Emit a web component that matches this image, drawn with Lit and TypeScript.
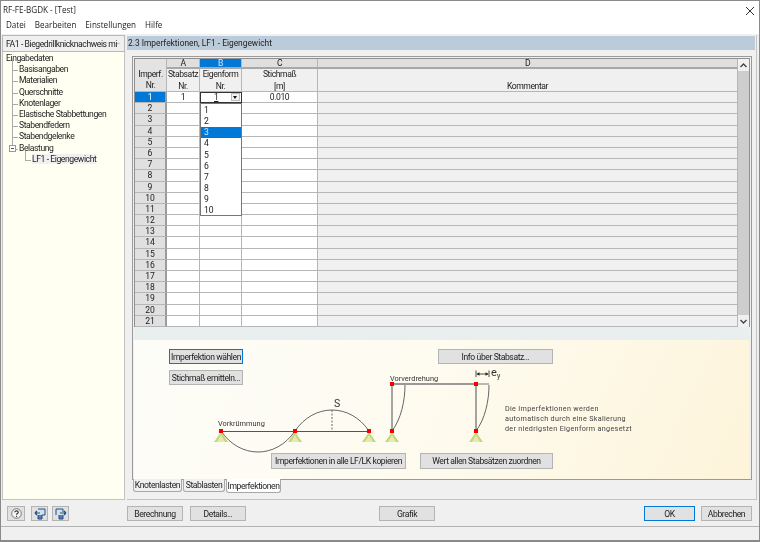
import { LitElement, html, css, svg } from "lit";
import { customElement } from "lit/decorators.js";

const tree = ["Basisangaben","Materialien","Querschnitte","Knotenlager","Elastische Stabbettungen","Stabendfedern","Stabendgelenke"];
const rows = Array.from({length:21},(_, i)=>i+1);
const drop = [1,2,3,4,5,6,7,8,9,10];

const support = (x:number,y:number)=>svg`<path d="M${x} ${y}L${x-7} ${y+10}H${x+7}Z" fill="#c5d77a"/><path d="M${x} ${y+3}L${x-4} ${y+10}H${x+4}Z" fill="#e3ecae"/>`;
const node = (x:number,y:number)=>svg`<rect x=${x-2} y=${y-2} width="4" height="4" fill="#f00000"/>`;

@customElement("app-root")
export class AppRoot extends LitElement {
  static styles = css`
    :host{display:block;width:760px;height:542px;overflow:hidden;font-family:Roboto,"Liberation Sans",Arial,sans-serif;font-size:8.6px;letter-spacing:-.42px;color:#1c1c1c;}
    *{box-sizing:border-box;}
    .window{width:760px;height:542px;border:1px solid #8a8a8a;border-bottom:2px solid #8a8a8a;background:#f0f0f0;display:flex;flex-direction:column;position:relative;filter:blur(.25px);}
    .top{background:#fff;height:33px;display:flex;flex-direction:column;letter-spacing:0;}
    .title{height:16px;padding:3px 0 0 2px;font-family:"Open Sans",sans-serif;font-size:8.1px;line-height:11px;display:flex;justify-content:space-between;}
    .close{margin:2px 4px 0 0;}
    .menu{display:flex;gap:9px;padding:2px 0 0 5px;font-family:"Open Sans",sans-serif;font-size:8.1px;line-height:11px;}
    .main{height:466px;display:flex;padding:1px 2px 0 1px;gap:2px;}
    .left{width:123px;flex:none;display:flex;flex-direction:column;}
    .combo{height:17px;background:#f0f0f0;border:1px solid #b8b8b8;display:flex;align-items:center;justify-content:space-between;padding:0 4px 0 3px;white-space:nowrap;overflow:hidden;}
    .tree{flex:1;background:#fffff2;border:1px solid #c4c4c4;border-top:none;padding:1px 0 0 3px;line-height:11.2px;}
    .tree div{height:11.2px;white-space:nowrap;}
    .ti{position:relative;padding-left:13px;}
    .ti::before{content:"";position:absolute;left:6px;top:6px;width:6px;border-top:1px solid #aaa;}
    .ti::after{content:"";position:absolute;left:6px;top:-5px;height:11px;border-left:1px solid #aaa;}
    .sign{position:absolute;left:3px;top:2px;width:7px;height:7px;border:1px solid #9a9a9a;background:#fff;z-index:1;}
    .sign::after{content:"";position:absolute;left:1px;top:2px;width:3px;border-top:1px solid #555;}
    .leaf{position:relative;padding-left:26px;}
    .leaf::before{content:"";position:absolute;left:19px;top:6px;width:6px;border-top:1px solid #aaa;}
    .leaf::after{content:"";position:absolute;left:19px;top:-3px;height:9px;border-left:1px solid #aaa;}
    .leaf span{background:#f0f0f0;}
    .right{flex:1;border-right:1px solid #c4c4c4;display:flex;flex-direction:column;border-bottom:1px solid #c4c4c4;}
    .head{height:14px;margin-top:1px;background:#bccbd9;padding-left:1px;line-height:14px;margin-right:1px;flex:none;font-size:8.4px;letter-spacing:0;}
    .panelwrap{padding:6px 4px 0 5px;flex:1;display:flex;flex-direction:column;}
    .panel{width:620px;border:1px solid #9a9a9a;background:#f0f0f0;padding:1px 0 0 1px;display:flex;flex-direction:column;flex:none;}
    .gridbox{display:flex;flex:none;height:269px;width:616px;border:1px solid #8f8f8f;border-bottom:none;}
    .grid{display:grid;grid-template-columns:32px 33px 42px 76px 420px;grid-template-rows:10px 23px repeat(21,11.19px);width:603px;position:relative;}
    .c{border-right:1px solid #b6b6b6;border-bottom:1px solid #b6b6b6;text-align:center;line-height:10px;background:#fff;overflow:visible;white-space:nowrap;}
    .letter{background:#dfdfdf;border-bottom:2px solid #a8a8a8;line-height:9px;}
    .sel{background:#0078d7;color:#d8eaff;}
    .sub{background:#f0f0f0;line-height:11.5px;}
    .corner{grid-row:1 / span 2;background:#e3e3e3;padding-top:10px;line-height:11px;}
    .rh{background:#e0e0e0;border-right:2px solid #9c9c9c;letter-spacing:0;}
    .rowsel{background:#0078d7;color:#fff;border-right:2px solid #9c9c9c;}
    .gray{background:#f0f0f0;}
    .edit{position:relative;outline:1.5px solid #333;outline-offset:-1px;}
    .edit u{position:absolute;left:14px;top:0;}
    .arrow{position:absolute;right:1px;top:1px;width:9px;height:8px;background:#f0f0f0;border:1px solid #bbb;}
    .arrow::after{content:"";position:absolute;left:1px;top:2px;border:2.5px solid transparent;border-top:3px solid #111;border-bottom:none;}
    .drop{position:absolute;left:65px;top:44px;width:42px;height:113px;background:#fff;border:1px solid #777;z-index:2;padding-top:1px;letter-spacing:0;}
    .drop div{height:11.15px;line-height:11px;padding-left:3px;}
    .drop .on{background:#0078d7;color:#dbe9f7;}
    .sb{width:11px;background:#cdcdcd;display:flex;flex-direction:column;justify-content:space-between;}
    .sb div{height:12px;background:#f0f0f0;display:flex;align-items:center;justify-content:center;}
    .strip{height:13px;flex:none;width:615px;background:#e9eeee;}
    .draw{position:relative;flex:none;width:615px;height:139px;background:linear-gradient(115deg,#fdfdf8 0%,#fefbf0 45%,#fdf4da 100%);}
    .draw svg{display:block;letter-spacing:0;}
    .b{background:#e1e1e1;border:1px solid #b4b4b4;display:flex;align-items:center;justify-content:center;white-space:nowrap;color:#1c1c1c;flex:none;}
    .draw .b{position:absolute;}
    .focus{border:1.5px solid #0078d7;}
    .b1{left:35px;top:9px;width:74px;height:15px;}
    .b2{left:35px;top:30px;width:74px;height:15px;}
    .b3{left:304px;top:9px;width:115px;height:15px;}
    .b4{left:137px;top:113px;width:135px;height:16px;}
    .b5{left:286px;top:113px;width:133px;height:16px;}
    .tabs{display:flex;height:13px;margin-top:-1px;padding-left:1px;flex:none;position:relative;}
    .tab{height:13px;border:1px solid #a8a8a8;border-top:none;border-radius:0 0 3px 3px;background:#f0f0f0;display:flex;align-items:center;justify-content:center;margin-right:1px;}
    .tab.on{background:#fff;height:14px;}
    .t1{width:49px;}.t2{width:42px;}.t3{width:55px;}
    .footer{height:27px;flex:none;display:flex;align-items:flex-start;padding:6px 0 0 6px;border-bottom:1px solid #b4b4b4;}
    .ib{width:17px;height:15px;padding:0;}
    .ib1{width:18px;}
    .f15{height:15px;}
    .m1{margin-left:6px;}.m2{margin-left:4px;}
    .berechnung{margin-left:58px;width:56px;}
    .details{margin-left:7px;width:56px;}
    .grafik{margin-left:133px;width:56px;}
    .ok{margin-left:209px;width:51px;}
    .abbr{margin-left:6px;width:51px;}
    .status{flex:1;background:#f0f0f0;}
  `;
  render(){
    return html`<div class="window">
      <div class="top">
        <div class="title"><span>RF-FE-BGDK - [Test]</span>
          <svg class="close" width="10" height="10" viewBox="0 0 10 10"><path d="M1 1L9 9M9 1L1 9" stroke="#333" stroke-width="1"/></svg></div>
        <div class="menu"><span>Datei</span><span>Bearbeiten</span><span>Einstellungen</span><span>Hilfe</span></div>
      </div>
      <div class="main">
        <div class="left">
          <div class="combo"><span>FA1 - Biegedrillknicknachweis mi</span>
            <svg width="7" height="5" viewBox="0 0 7 5"><path d="M.5 1L3.5 4L6.5 1" fill="none" stroke="#555"/></svg></div>
          <div class="tree">
            <div>Eingabedaten</div>
            ${tree.map(t=>html`<div class="ti">${t}</div>`)}
            <div class="ti"><i class="sign"></i>Belastung</div>
            <div class="leaf"><span>LF1 - Eigengewicht</span></div>
          </div>
        </div>
        <div class="right">
          <div class="head">2.3 Imperfektionen, LF1 - Eigengewicht</div>
          <div class="panelwrap"><div class="panel">
            <div class="gridbox">
              <div class="grid">
                <div class="c corner">Imperf.<br>Nr.</div>
                <div class="c letter">A</div><div class="c letter sel">B</div><div class="c letter">C</div><div class="c letter">D</div>
                <div class="c sub">Stabsatz<br>Nr.</div><div class="c sub">Eigenform<br>Nr.</div><div class="c sub">Stichmaß<br>[m]</div><div class="c sub"><br>Kommentar</div>
                ${rows.map(r=> r===1 ? html`
                  <div class="c rowsel">1</div><div class="c">1</div>
                  <div class="c edit"><u>1</u><span class="arrow"></span></div>
                  <div class="c">0.010</div><div class="c gray"></div>` : html`
                  <div class="c rh">${r}</div><div class="c"></div><div class="c"></div><div class="c"></div><div class="c gray"></div>`)}
                <div class="drop">${drop.map(d=>html`<div class=${d===3?"on":""}>${d}</div>`)}</div>
              </div>
              <div class="sb">
                <div><svg width="7" height="5" viewBox="0 0 7 5"><path d="M.5 4L3.5 1L6.5 4" fill="none" stroke="#444" stroke-width="1.4"/></svg></div>
                <div><svg width="7" height="5" viewBox="0 0 7 5"><path d="M.5 1L3.5 4L6.5 1" fill="none" stroke="#444" stroke-width="1.4"/></svg></div>
              </div>
            </div>
            <div class="strip"></div>
            <div class="draw">
              <svg width="615" height="139" viewBox="134 339 615 139">
                <path d="M221 430.5H369" stroke="#555" stroke-width="1"/>
                <path d="M221 430C240 458 276 458 295 430" fill="none" stroke="#666" stroke-width="1"/>
                <path d="M295 430C314 402 350 402 369 430" fill="none" stroke="#666" stroke-width="1"/>
                <path d="M332 409V430" stroke="#666" stroke-dasharray="2 1.5"/>
                ${support(221,431)}${support(295,431)}${support(369,431)}
                ${node(221,430)}${node(295,430)}${node(369,430)}
                <text x="218" y="425" font-size="7.4" fill="#333">Vorkrümmung</text>
                <text x="334" y="406" font-size="10.5" fill="#333">S</text>
                <path d="M392 383H476" stroke="#777" stroke-width="1.5"/>
                <path d="M476 383H489" stroke="#777" stroke-width="1"/>
                <path d="M392 383V430M476 383V430" stroke="#777" stroke-width="1.3"/>
                <path d="M392 430C401 418 405 400 405 384M476 430C485 418 489 400 489 384" fill="none" stroke="#666"/>
                ${support(392,431)}${support(476,431)}
                ${node(392,383)}${node(476,383)}${node(392,430)}${node(476,430)}
                <text x="390" y="380" font-size="7.4" fill="#333">Vorverdrehung</text>
                <path d="M476 369.500V376M489 369.500V376M477 373H488" stroke="#222" stroke-width=".8"/>
                <path d="M476.500 373l3-1.700v3.400ZM488.500 373l-3-1.700v3.400Z" fill="#222"/>
                <text x="491" y="375" font-size="11" fill="#333">e</text>
                <text x="497" y="377" font-size="7" fill="#333">y</text>
                <text font-size="7.2" fill="#444" letter-spacing=".32">
                  <tspan x="505" y="409.500">Die Imperfektionen werden</tspan>
                  <tspan x="505" y="419.500">automatisch durch eine Skalierung</tspan>
                  <tspan x="505" y="429.500">der niedrigsten Eigenform angesetzt</tspan>
                </text>
              </svg>
              <div class="b focus b1">Imperfektion wählen</div>
              <div class="b b2">Stichmaß emitteln...</div>
              <div class="b b3">Info über Stabsatz...</div>
              <div class="b b4">Imperfektionen in alle LF/LK kopieren</div>
              <div class="b b5">Wert allen Stabsätzen zuordnen</div>
            </div>
          </div>
          <div class="tabs">
            <div class="tab t1">Knotenlasten</div><div class="tab t2">Stablasten</div><div class="tab t3 on">Imperfektionen</div>
          </div>
          </div>
        </div>
      </div>
      <div class="footer">
        <div class="b ib ib1"><svg width="11" height="11" viewBox="0 0 11 11"><circle cx="5.500" cy="5.500" r="4.800" fill="#f4f4f4" stroke="#777"/><path d="M3.800 4.200C3.800 2.400 7.300 2.400 7.300 4.200C7.300 5.500 5.500 5.500 5.500 6.800" fill="none" stroke="#333" stroke-width="1.100"/><path d="M5.500 7.800v1.200" stroke="#333" stroke-width="1.100"/></svg></div>
        <div class="b ib m1"><svg width="12" height="12" viewBox="0 0 12 12"><path d="M4 1H11V7H8" fill="#cfe0f2" stroke="#25507f"/><path d="M6 5H1M1 5L3 3M1 5L3 7" fill="none" stroke="#1b4f8a" stroke-width="1.200"/><path d="M4 7V11H8V7" fill="#4e7fb5" stroke="#25507f"/></svg></div>
        <div class="b ib m2"><svg width="12" height="12" viewBox="0 0 12 12"><path d="M1 7V1H8V4" fill="#cfe0f2" stroke="#25507f"/><path d="M5 5H11M11 5L9 3M11 5L9 7" fill="none" stroke="#1b4f8a" stroke-width="1.200"/><path d="M4 7V11H8V7" fill="#4e7fb5" stroke="#25507f"/></svg></div>
        <div class="b f15 berechnung">Berechnung</div>
        <div class="b f15 details">Details...</div>
        <div class="b f15 grafik">Grafik</div>
        <div class="b f15 focus ok">OK</div>
        <div class="b f15 abbr">Abbrechen</div>
      </div>
      <div class="status"></div>
    </div>`;
  }
}
